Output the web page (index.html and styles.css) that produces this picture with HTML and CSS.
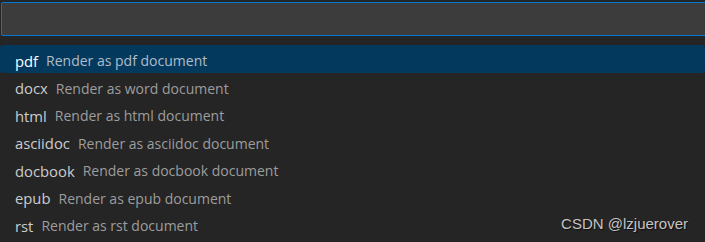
FILE: index.html
```html
<!DOCTYPE html>
<html lang="en">
<head>
  <meta charset="UTF-8" />
  <title>Quick Pick</title>
  <link rel="stylesheet" href="styles.css">
</head>
<body>
  <div class="picker">
    <div class="input-box"></div>

    <ul class="list">
      <li class="item selected"><span class="label">pdf</span><span class="desc">Render as pdf document</span></li>
      <li class="item"><span class="label">docx</span><span class="desc">Render as word document</span></li>
      <li class="item"><span class="label">html</span><span class="desc">Render as html document</span></li>
      <li class="item"><span class="label">asciidoc</span><span class="desc">Render as asciidoc document</span></li>
      <li class="item"><span class="label">docbook</span><span class="desc">Render as docbook document</span></li>
      <li class="item"><span class="label">epub</span><span class="desc">Render as epub document</span></li>
      <li class="item"><span class="label">rst</span><span class="desc">Render as rst document</span></li>
    </ul>

    <div class="watermark">CSDN @lzjuerover</div>
  </div>
</body>
</html>
```

FILE: styles.css
```css
body {
  margin: 0;
  background-color: #252526;
  font-family: "Open Sans", "Noto Sans", sans-serif;
  overflow: hidden;
}

.picker {
  position: relative;
  height: 242px;
  padding-top: 2px;
  box-sizing: border-box;
}

.input-box {
  margin-left: 1px;
  margin-right: -4px;
  height: 32px;
  background-color: #3c3c3c;
  border: 1px solid #0078d4;
  border-radius: 2px;
}

.list {
  list-style: none;
  margin: 9px 0 0;
  padding: 0;
}

.item {
  height: 27.5px;
  box-sizing: border-box;
  display: flex;
  align-items: center;
  padding: 4px 0 0 15px;
  font-size: 14px;
  border-radius: 3px;
}

.item.selected {
  background-color: #04395e;
}

.label {
  color: #cccccc;
  font-size: 14.8px;
  margin-right: 8px;
}

.selected .label {
  color: #ffffff;
}

.desc {
  color: #9d9d9d;
}

.selected .desc {
  color: #b0bcc8;
}

.watermark {
  position: absolute;
  right: 17px;
  bottom: 10px;
  font-family: "Liberation Sans", Arial, sans-serif;
  font-size: 15px;
  color: #c4c4c4;
  text-shadow: 1px 1px 1px rgba(0, 0, 0, 0.6);
}
```
